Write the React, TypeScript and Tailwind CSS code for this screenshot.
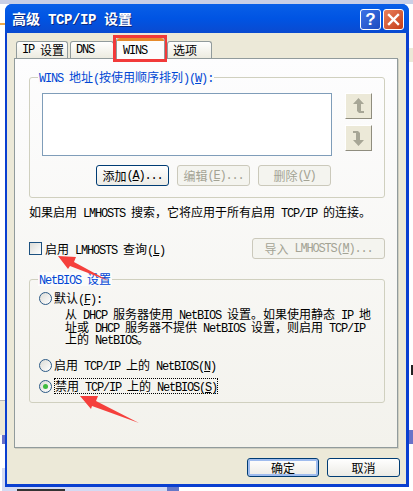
import type { ReactNode } from 'react'

const UI_FONT = "font-['Noto_Sans_CJK_SC',sans-serif]"

// Latin text in the dialog is a narrow mono, CJK is a full 12px square
function Mixed({ text, latin = 'text-[12px] tracking-[-1.2px]' }: { text: string; latin?: string }) {
  const parts = text.split(/([\x00-\x7f]+)/).filter(Boolean)
  return (
    <>
      {parts.map((part, i) => {
        if (!/^[\x00-\x7f]/.test(part)) return <span key={i}>{part}</span>
        const bits = part.split(/\(([A-Z])\)/)
        return (
          <span key={i} className={`font-['Liberation_Mono',monospace] ${latin}`}>
            {bits.map((bit, j) =>
              j % 2 === 1 ? (
                <span key={j}>
                  (<u>{bit}</u>)
                </span>
              ) : (
                <span key={j}>{bit}</span>
              ),
            )}
          </span>
        )
      })}
    </>
  )
}

function Line({ text, className = '' }: { text: string; className?: string }) {
  return (
    <div className={`h-[14px] whitespace-pre leading-[14px] text-black ${className}`}>
      <Mixed text={text} />
    </div>
  )
}

function PushButton({ text, width, disabled, primary }: { text: string; width: string; disabled?: boolean; primary?: boolean }) {
  if (disabled) {
    return (
      <div className={`flex h-[21px] ${width} items-center justify-center whitespace-pre rounded-[3px] border border-[#cbc9bb] bg-[#f4f4ef] text-[12px] leading-none text-[#a3a394]`}>
        <Mixed text={text} />
      </div>
    )
  }
  return (
    <div
      className={`flex h-full ${width} items-center justify-center whitespace-pre rounded-[3px] border border-[#003c74] bg-gradient-to-b from-white to-[#ecebe5] text-[12px] leading-none text-black ${
        primary ? 'shadow-[inset_0_0_0_2px_#9fbcee]' : ''
      }`}
    >
      <Mixed text={text} />
    </div>
  )
}

function ArrowButton({ children }: { children: ReactNode }) {
  return (
    <div className="flex h-[26px] w-[27px] items-center justify-center border border-t-white border-l-white border-r-[#8f8d7e] border-b-[#8f8d7e] bg-[#ece9d8]">
      {children}
    </div>
  )
}

function Tab({ text, width, selected }: { text: string; width: string; selected?: boolean }) {
  if (selected) {
    return (
      <div className={`z-10 -mb-px flex h-[21px] ${width} flex-col rounded-t-[3px] border-x border-[#919b9c] bg-[#fdfdfd]`}>
        <div className="h-[3px] rounded-t-[3px] bg-[#e68b2c]" />
        <div className="pl-[6px] pt-[1px] text-[12px] leading-[14px] text-black">
          <Mixed text={text} />
        </div>
      </div>
    )
  }
  return (
    <div className={`flex h-[17px] ${width} items-center whitespace-pre rounded-t-[3px] border-x border-t border-[#919b9c] bg-gradient-to-b from-white to-[#ecebe0] pl-[5px] text-[12px] leading-none text-black`}>
      <Mixed text={text} />
    </div>
  )
}

function Radio({ checked }: { checked?: boolean }) {
  return (
    <div className="flex h-[13px] w-[13px] shrink-0 items-center justify-center rounded-full border border-[#2c5a86] bg-gradient-to-br from-[#dcdcd7] to-white">
      {checked && <div className="h-[5px] w-[5px] rounded-full bg-[#3fbb3f]" />}
    </div>
  )
}

function Legend({ text, className }: { text: string; className: string }) {
  return (
    <div className={`absolute -top-[8px] h-[14px] whitespace-pre bg-[#fbfbfa] px-[1px] text-[12px] leading-[14px] text-[#0046d5] ${className}`}>
      <Mixed text={text} />
    </div>
  )
}

export default function App() {
  return (
    <div className={`relative h-[491px] w-[413px] overflow-hidden bg-white ${UI_FONT}`}>
      {/* the desktop page peeking out behind the dialog */}
      <div className="absolute inset-x-0 top-0 h-[4px] bg-[#c9cfe6]" />
      <div className="absolute left-0 top-[23px] h-[2px] w-[5px] bg-[#efa94a]" />
      <div className="absolute left-0 top-[400px] h-[35px] w-[5px] border-t border-[#b5b5b5] bg-[#ece9d8]" />
      <div className="absolute left-[2px] top-[435px] h-[9px] w-[3px] bg-[#6a72c8]" />
      <div className="absolute bottom-0 left-[2px] h-[23px] w-[165px] bg-[#d3daf3]" />
      <div className="absolute bottom-0 left-[167px] h-[5px] w-[12px] bg-[#6478c8]" />
      <div className="absolute bottom-0 left-[17px] h-[2px] w-[48px] bg-[#333333]" />
      <div className="absolute right-0 top-[430px] h-[14px] w-[4px] bg-[#6a72c8]" />
      <div className="absolute right-0 top-[48px] h-[14px] w-[4px] bg-[#ece9d8]" />
      <div className="absolute right-0 top-[365px] h-[10px] w-[2px] bg-[#222222]" />

      <div className="absolute left-[5px] top-[4px] flex h-[483px] w-[404px] flex-col overflow-hidden rounded-t-[7px] bg-[#0a3fd0]">
        {/* title bar */}
        <div className="flex h-[29px] shrink-0 items-center justify-between bg-gradient-to-b from-[#0a5fe8] via-[#0054e3] to-[#0a4ad0] pl-[7px] pr-[5px] pt-[1px]">
          <div className="whitespace-pre text-[14px] font-bold leading-none text-white [text-shadow:1px_1px_0_#0a2a80]">
            <Mixed text="高级 TCP/IP 设置" latin="text-[14px] tracking-[-0.4px]" />
          </div>
          <div className="flex gap-[2px]">
            <div className="flex h-[21px] w-[21px] items-center justify-center rounded-[3px] border border-white bg-gradient-to-br from-[#3c72e6] to-[#1e4bc0] text-[17px] font-bold leading-none text-white">
              <span className="font-['Liberation_Sans',sans-serif]">?</span>
            </div>
            <div className="flex h-[21px] w-[21px] items-center justify-center rounded-[3px] border border-white bg-gradient-to-br from-[#e8805c] to-[#c53a12]">
              <svg width="13" height="13" viewBox="0 0 13 13">
                <path d="M2 2 L11 11 M11 2 L2 11" stroke="white" strokeWidth="2.4" strokeLinecap="square" />
              </svg>
            </div>
          </div>
        </div>

        {/* dialog body */}
        <div className="ml-[2px] mr-[3px] mb-[3px] flex h-[451px] flex-col bg-[#ece9d8] pl-[7px] pt-[5px]">
          <div className="flex items-end gap-[2px] pl-[2px]">
            <Tab text="IP 设置" width="w-[52px]" />
            <Tab text="DNS" width="w-[44px]" />
            <Tab text="WINS" width="w-[49px]" selected />
            <Tab text="选项" width="w-[45px]" />
          </div>

          {/* tab page */}
          <div className="h-[390px] w-[384px] border border-[#919b9c] bg-gradient-to-b from-[#fdfdfe] to-[#f3f2ec] pl-[14px] pt-[18px] shadow-[1px_1px_0_#d0cfc2]">
            <div className="relative h-[121px] w-[356px] rounded-[3px] border border-[#d0d0bf] pl-[12px] pt-[15px]">
              <Legend text="WINS 地址(按使用顺序排列)(W):" className="left-[8px]" />
              <div className="flex gap-[13px]">
                <div className="h-[63px] w-[290px] border border-[#7f9db9] bg-white" />
                <div className="flex flex-col gap-[6px]">
                  <ArrowButton>
                    <svg width="13" height="16" viewBox="0 0 13 16" fill="#a7a696">
                      <path d="M6.5 0 L12 6 L9 6 L9 13 L12 13 L12 15 L7 15 L5 13 L5 6 L1 6 Z" />
                    </svg>
                  </ArrowButton>
                  <ArrowButton>
                    <svg width="13" height="16" viewBox="0 0 13 16" fill="#a7a696">
                      <path d="M1 1 L6 1 L8 3 L8 10 L12 10 L6.5 16 L1 10 L4 10 L4 3 L1 3 Z" />
                    </svg>
                  </ArrowButton>
                </div>
              </div>
              <div className="ml-[54px] mt-[9px] flex h-[21px] gap-[8px]">
                <PushButton text="添加(A)..." width="w-[73px]" />
                <PushButton text="编辑(E)..." width="w-[73px]" disabled />
                <PushButton text="删除(V)" width="w-[73px]" disabled />
              </div>
            </div>

            <Line text="如果启用 LMHOSTS 搜索，它将应用于所有启用 TCP/IP 的连接。" className="mt-[7px] text-[12px]" />

            <div className="mt-[19px] flex h-[21px] w-[356px] items-center justify-between">
              <div className="flex items-center gap-[3px] text-[12px]">
                <div className="h-[13px] w-[13px] border border-[#1c5180] bg-gradient-to-br from-[#dcdcd7] to-white" />
                <Line text="启用 LMHOSTS 查询(L)" />
              </div>
              <PushButton text="导入 LMHOSTS(M)..." width="w-[133px]" disabled />
            </div>

            {/* NetBIOS group */}
            <div className="relative mt-[20px] h-[124px] w-[356px] rounded-[3px] border border-[#d0d0bf] pl-[9px] pt-[11px] text-[12px]">
              <Legend text="NetBIOS 设置" className="left-[8px]" />
              <div className="flex items-center gap-[2px]">
                <Radio />
                <Line text="默认(F):" />
              </div>
              <div className="ml-[26px] mt-[2px] flex flex-col">
                <div className="h-[13px]"><Line text="从 DHCP 服务器使用 NetBIOS 设置。如果使用静态 IP 地" /></div>
                <div className="h-[12px]"><Line text="址或 DHCP 服务器不提供 NetBIOS 设置，则启用 TCP/IP" /></div>
                <div className="h-[13px]"><Line text="上的 NetBIOS。" /></div>
              </div>
              <div className="mt-[13px] flex items-center gap-[2px]">
                <Radio />
                <Line text="启用 TCP/IP 上的 NetBIOS(N)" />
              </div>
              <div className="mt-[6px] flex items-center gap-[2px]">
                <Radio checked />
                <div className="border border-dotted border-black">
                  <Line text="禁用 TCP/IP 上的 NetBIOS(S)" />
                </div>
              </div>
            </div>
          </div>

          <div className="mr-[6px] mt-[10px] flex h-[19px] justify-end gap-[8px]">
            <PushButton text="确定" width="w-[72px]" primary />
            <PushButton text="取消" width="w-[73px]" />
          </div>
        </div>
      </div>

      {/* red annotations drawn on top of the screenshot */}
      <div className="absolute left-[113px] top-[35px] h-[27px] w-[54px] border-[3px] border-[#f23a3a]" />
      <svg className="absolute left-0 top-0" width="413" height="491" viewBox="0 0 413 491">
        <path d="M58 256 L76 257 L74 262 L109 281 L70 266 L68 269 Z" fill="#f5403c" />
        <path d="M80 396 L98 396 L96 401 L139 423 L92 406 L91 409 Z" fill="#f5403c" />
      </svg>
    </div>
  )
}
